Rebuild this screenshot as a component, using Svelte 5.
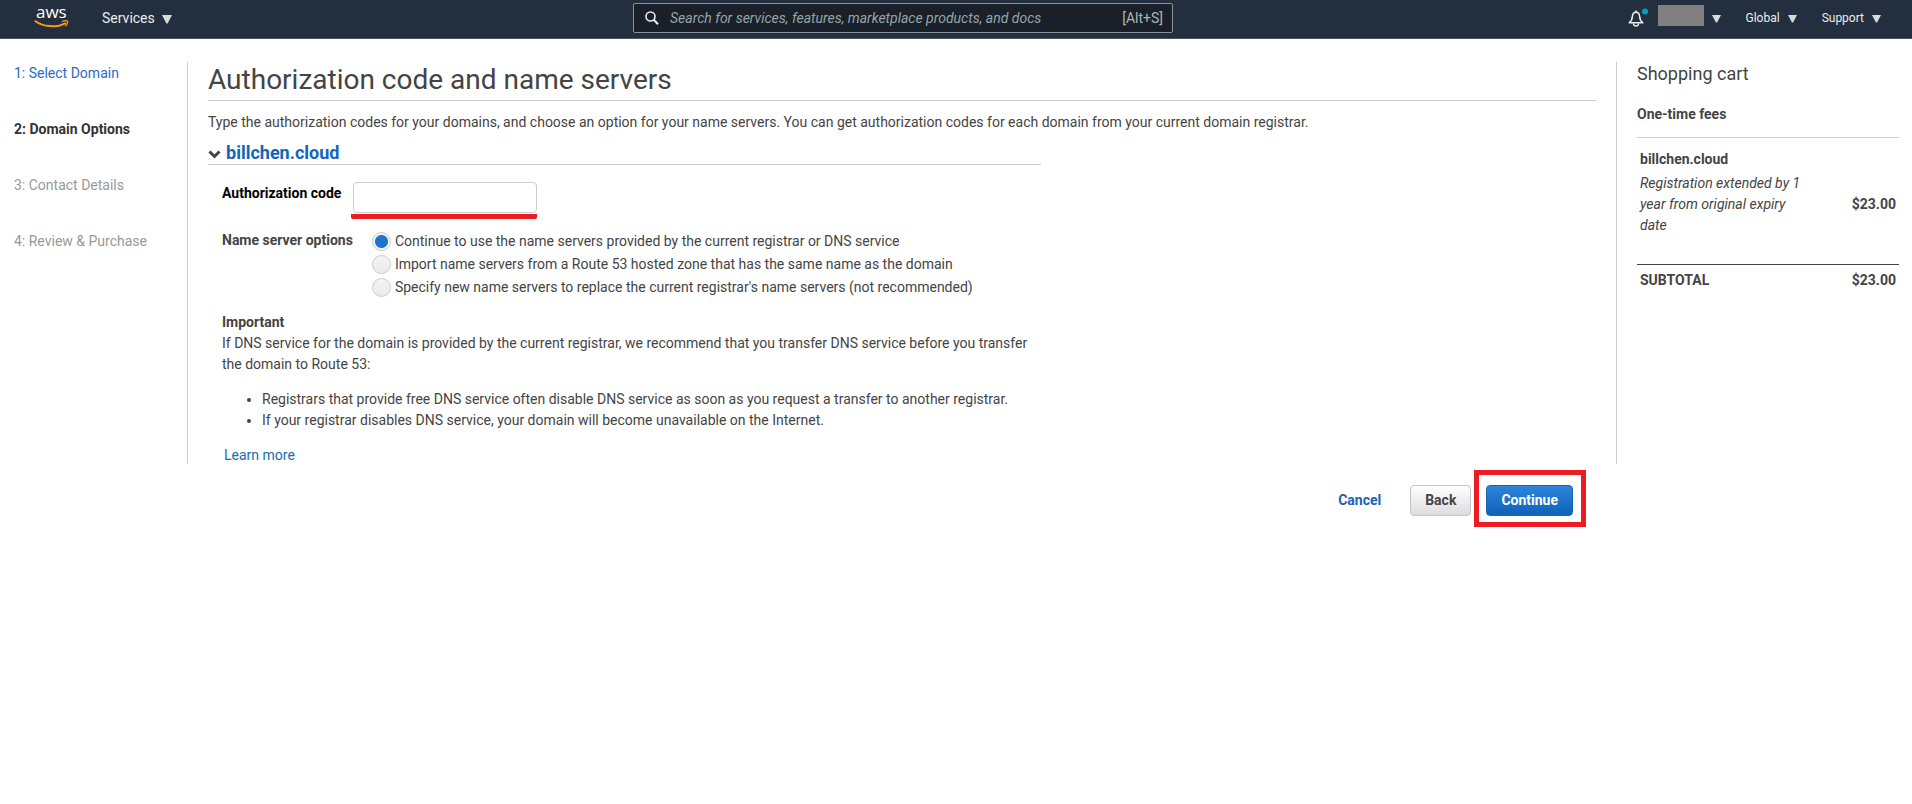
<script>
  const steps = [
    { label: '1: Select Domain', state: 'done' },
    { label: '2: Domain Options', state: 'current' },
    { label: '3: Contact Details', state: 'todo' },
    { label: '4: Review & Purchase', state: 'todo' }
  ];
  const options = [
    { id: 'keep', label: 'Continue to use the name servers provided by the current registrar or DNS service' },
    { id: 'import', label: 'Import name servers from a Route 53 hosted zone that has the same name as the domain' },
    { id: 'new', label: "Specify new name servers to replace the current registrar's name servers (not recommended)" }
  ];
  let choice = $state('keep');
  let code = $state('');
  let open = $state(true);
</script>

{#snippet caret(size)}
  <svg class="caret" width={size} height={size} viewBox="0 0 10 10" aria-hidden="true"><path d="M0 1h10L5.600 9.500H4.400z" fill="#d5dbdb" /></svg>
{/snippet}

<header class="top">
  <div class="top-left">
    <a class="logo" href="#home">
      <svg width="36" height="32" viewBox="0 0 36 32">
        <text x="2" y="18" font-family="Open Sans, sans-serif" font-size="17" fill="#fff">aws</text>
        <path d="M1.500 21.200C9 26.600 22 28.200 31.500 23.300" fill="none" stroke="#f90" stroke-width="2" stroke-linecap="round" />
        <path d="M28.500 21.300c2-.7 4.200-.8 5-.3.500.7-.3 3.200-1.700 4.800" fill="none" stroke="#f90" stroke-width="1.400" stroke-linecap="round" stroke-linejoin="round" />
      </svg>
    </a>
    <button class="menu services">Services {@render caret(10)}</button>
  </div>
  <label class="search">
    <svg width="14" height="14" viewBox="0 0 14 14" aria-hidden="true"><circle cx="5.500" cy="5.500" r="4.500" fill="none" stroke="#eaeded" stroke-width="1.600" /><path d="M8.800 8.800l4.200 4.400" stroke="#eaeded" stroke-width="2" /></svg>
    <input type="search" aria-label="Search" placeholder="Search for services, features, marketplace products, and docs" />
    <span>[Alt+S]</span>
  </label>
  <nav class="top-right">
    <button class="menu bell" aria-label="Notifications">
      <svg width="22" height="22" viewBox="0 0 22 22">
        <path d="M1.200 14.800c2.600-2 3-3.600 3.200-6.400C4.600 5.600 6.200 4.200 8 4.200s3.400 1.400 3.600 4.200c.2 2.800.6 4.400 3.200 6.400z" fill="none" stroke="#eaeded" stroke-width="1.500" stroke-linejoin="round" />
        <path d="M8 2.500v1.700M5.500 15.500c.2 3.400 4.800 3.400 5 0" fill="none" stroke="#eaeded" stroke-width="1.500" />
        <circle cx="17" cy="3.500" r="3" fill="#00a1c9" />
      </svg>
    </button>
    <button class="menu account" aria-label="Account"><i></i>{@render caret(9)}</button>
    <button class="menu">Global {@render caret(9)}</button>
    <button class="menu">Support {@render caret(9)}</button>
  </nav>
</header>

<div class="page">
  <ol class="steps">
    {#each steps as step}
      <li class={step.state}>
        {#if step.state === 'done'}<a href="#select">{step.label}</a>{:else}{step.label}{/if}
      </li>
    {/each}
  </ol>

  <main>
    <h1>Authorization code and name servers</h1>
    <p class="intro">Type the authorization codes for your domains, and choose an option for your name servers. You can get authorization codes for each domain from your current domain registrar.</p>

    <section>
      <h2>
        <button onclick={() => (open = !open)} aria-expanded={open}>
          <svg width="13" height="9" viewBox="0 0 13 9" aria-hidden="true"><path d="M1.500 1.500l5 5 5-5" fill="none" stroke="#444" stroke-width="3" /></svg>
          billchen.cloud
        </button>
      </h2>
      {#if open}
        <div class="body">
          <div class="code">
            <label for="code">Authorization code</label>
            <div class="marked"><input id="code" type="text" bind:value={code} /></div>
          </div>

          <div class="servers" role="radiogroup" aria-labelledby="ns">
            <strong id="ns">Name server options</strong>
            <div class="choices">
              {#each options as o}
                <label><input type="radio" name="ns" value={o.id} bind:group={choice} />{o.label}</label>
              {/each}
            </div>
          </div>

          <p class="note"><strong>Important</strong><br />If DNS service for the domain is provided by the current registrar, we recommend that you transfer DNS service before you transfer the domain to Route 53:</p>
          <ul>
            <li>Registrars that provide free DNS service often disable DNS service as soon as you request a transfer to another registrar.</li>
            <li>If your registrar disables DNS service, your domain will become unavailable on the Internet.</li>
          </ul>
          <a class="learn" href="#learn">Learn more</a>
        </div>
      {/if}
    </section>
  </main>

  <aside>
    <h3>Shopping cart</h3>
    <table>
      <thead><tr><th colspan="2">One-time fees</th></tr></thead>
      <tbody>
        <tr class="name"><th colspan="2">billchen.cloud</th></tr>
        <tr class="fee"><td>Registration extended by 1 year from original expiry date</td><td class="price">$23.00</td></tr>
      </tbody>
      <tfoot><tr><th>SUBTOTAL</th><td class="price">$23.00</td></tr></tfoot>
    </table>
  </aside>

  <div class="actions">
    <a href="#cancel">Cancel</a>
    <button class="btn back">Back</button>
    <div class="frame"><button class="btn primary">Continue</button></div>
  </div>
</div>

<style>
  :global(body) { background: #fff; color: #444; font: 14px/21px Roboto, "Liberation Sans", sans-serif; }
  * { box-sizing: border-box; }
  button, input { font: inherit; color: inherit; margin: 0; }
  button { cursor: pointer; }
  a { color: #146eb4; text-decoration: none; }
  h1, h2, h3, p, ul, ol { margin: 0; padding: 0; }
  strong, th, .price { font-weight: 700; }

  .top { display: grid; grid-template-columns: 633fr 540fr 739fr; height: 39px; background: #232f3e; border-bottom: 1px solid #4a5564; }
  .top-left { display: flex; align-items: flex-start; padding-left: 34px; }
  .logo { display: flex; margin-right: 32px; }
  .menu { display: flex; align-items: center; gap: 8px; height: 37px; padding: 0; border: 0; background: none; color: #eaeded; font-size: 12px; white-space: nowrap; }
  .services { gap: 7px; font-size: 14px; }
  .caret { display: block; }
  .search { display: flex; align-items: center; height: 30px; margin-top: 3px; padding: 0 9px 0 11px; border: 1px solid #879596; border-radius: 2px; background: #1a202a; color: #aab7b8; }
  .search input { flex: 1; min-width: 0; margin-left: 11px; padding: 0; border: 0; outline: 0; background: none; }
  .search input::placeholder { color: #95a5a6; font-style: italic; opacity: 1; }
  .top-right { display: flex; justify-content: flex-end; gap: 25px; padding-right: 31px; }
  .bell { margin-right: -17px; }
  .account i { width: 46px; height: 21px; margin-bottom: 6px; background: #808080; }

  .page { display: grid; grid-template-columns: 187px minmax(0, 1fr) 296px; padding-top: 23px; }
  .steps { list-style: none; padding: 1px 0 0 14px; }
  .steps li { height: 56px; color: #999; }
  .steps .current { color: #333; font-weight: 700; }
  .steps a { color: #2a6cc4; }

  main { padding: 0 20px; border-left: 1px solid #ccc; }
  h1 { height: 39px; border-bottom: 1px solid #ccc; font-size: 28px; line-height: 36px; font-weight: 400; }
  .intro { padding-top: 11px; }
  section { width: 60%; }
  h2 { height: 32px; padding-top: 8px; border-bottom: 1px solid #ccc; font-size: 18px; line-height: 24px; }
  h2 button { display: flex; align-items: center; gap: 5px; padding: 0; border: 0; background: none; color: #1166bb; font-weight: 700; line-height: 24px; }
  h2 svg { margin-top: 3px; }
  .body { padding: 17px 12px 0 14px; }
  .code { display: flex; align-items: flex-start; gap: 10px; }
  .code label { padding-top: 1px; color: #000; font-weight: 700; }
  .marked { padding: 0 0 1px 2px; border-bottom: 5px solid #ed1c24; border-radius: 2px; }
  .marked input { display: block; width: 184px; height: 31px; padding: 0 8px; border: 1px solid #ccc; border-radius: 4px; background: #fff; outline: 0; }
  .servers { display: flex; gap: 19px; margin-top: 11px; }
  .choices { display: grid; gap: 1px; }
  .choices label { display: flex; align-items: center; gap: 4px; height: 22px; }
  input[type="radio"] { appearance: none; width: 19px; height: 19px; border: 1px solid #ccc; border-radius: 50%; background: linear-gradient(#f4f4f4, #eaeaea); }
  input[type="radio"]:checked { background: radial-gradient(circle, #1e73cb 6px, #f2f2f2 7px); }
  .note { margin-top: 14px; }
  ul { margin-top: 14px; padding-left: 40px; }
  .learn { display: block; height: 19px; margin: 14px 0 0 2px; }

  aside { padding: 0 13px 0 20px; border-left: 1px solid #ccc; }
  h3 { font-size: 18px; line-height: 24px; font-weight: 400; }
  table { width: 100%; margin-top: 17px; border-collapse: collapse; }
  th { text-align: left; }
  td, th { padding: 0 3px; }
  thead th { height: 34px; padding: 0 0 11px; border-bottom: 1px solid #ccc; }
  .name th { height: 36px; padding-top: 11px; vertical-align: top; }
  .fee td { padding-bottom: 28px; }
  .fee td:first-child { padding-right: 40px; font-style: italic; }
  .price { text-align: right; }
  tfoot tr { border-top: 1px solid #444; }
  tfoot td, tfoot th { padding-top: 5px; }

  .actions { grid-column: 1 / 3; display: flex; align-items: flex-start; justify-content: flex-end; padding: 6px 30px 0 0; }
  .actions a { margin: 20px 29px 0 0; color: #1a62b8; font-weight: 700; }
  .btn { height: 31px; padding: 0 14px; border: 1px solid #c4c4c4; border-radius: 4px; background: linear-gradient(#fff, #ddd); font-weight: 700; }
  .back { margin-top: 15px; }
  .primary { display: block; border-color: #1865b5; background: linear-gradient(#2e84dc, #0f62b6); color: #fff; }
  .frame { margin-left: 3px; padding: 10px 8px 6px 7px; border: 5px solid #ed1c24; }
</style>
